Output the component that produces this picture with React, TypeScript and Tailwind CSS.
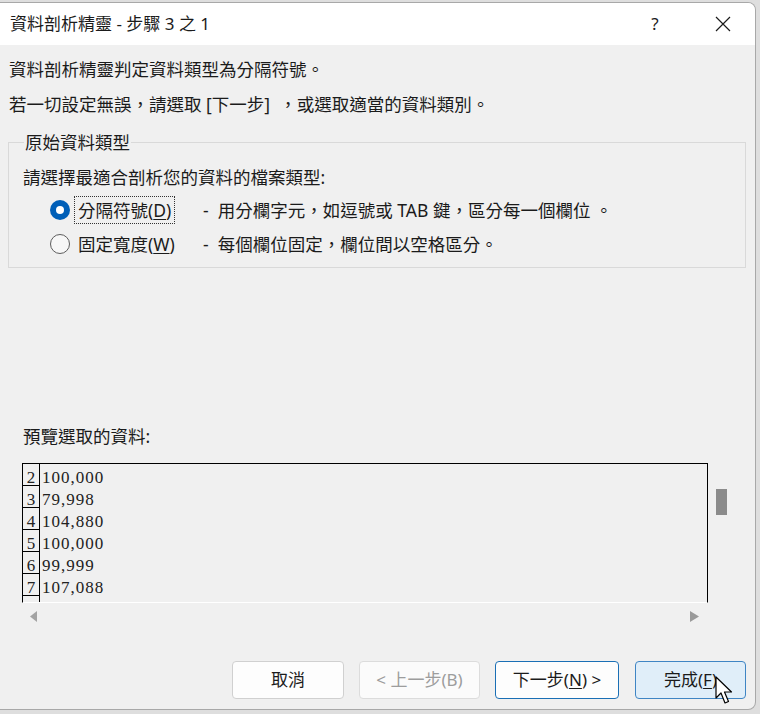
import React from "react";

const ROWS = [
  { n: "2", v: "100,000" },
  { n: "3", v: "79,998" },
  { n: "4", v: "104,880" },
  { n: "5", v: "100,000" },
  { n: "6", v: "99,999" },
  { n: "7", v: "107,088" },
  { n: "", v: "" },
];

function Radio({ checked }: { checked: boolean }) {
  if (checked) {
    return (
      <span className="flex h-[20px] w-[20px] shrink-0 items-center justify-center rounded-full bg-[#005fb8]">
        <span className="h-[8px] w-[8px] rounded-full bg-white" />
      </span>
    );
  }
  return <span className="h-[20px] w-[20px] shrink-0 rounded-full border border-[#5d5d5d] bg-[#f7f7f7]" />;
}

function Cursor() {
  return (
    <svg className="pointer-events-none absolute left-[715px] top-[676px]" width="20" height="30" viewBox="0 0 20 30">
      <path d="M1 1 L1 22 L6 17 L10 27 L13.5 25.5 L9.5 16 L16.5 16 Z" fill="white" stroke="black" strokeWidth="1.2" strokeLinejoin="round" />
    </svg>
  );
}

export default function App() {
  return (
    <div className="relative h-[714px] w-[760px] overflow-hidden bg-[#dedede] pt-[2px] font-['Noto_Sans','Noto_Sans_CJK_TC',sans-serif] text-[#1b1b1b]">
      <div className="flex h-[708px] w-[756px] flex-col overflow-hidden rounded-r-lg border border-l-0 border-[#a8a8a8] bg-[#f0f0f0]">
        {/* title bar */}
        <div className="flex h-[42px] shrink-0 items-center bg-white pl-[10px]">
          <span className="text-[17px] leading-[24px]">資料剖析精靈 - 步驟 3 之 1</span>
          <span className="ml-auto mr-[50px] w-[20px] text-center text-[17px] leading-[24px]">?</span>
          <svg className="mr-[24px]" width="16" height="16" viewBox="0 0 16 16">
            <path d="M1 1 L15 15 M15 1 L1 15" stroke="#1b1b1b" strokeWidth="1.2" />
          </svg>
        </div>

        {/* body */}
        <div className="flex flex-1 flex-col pt-[12px] text-[17.5px]">
          <p className="pl-[9px] leading-[24px]">資料剖析精靈判定資料類型為分隔符號。</p>
          <p className="mt-[11px] pl-[9px] leading-[24px]">若一切設定無誤，請選取 [下一步]&nbsp; ，或選取適當的資料類別。</p>

          <fieldset className="mx-[8px] mt-[14px] w-[738px] border border-[#d9d9d9] px-[14px] pb-[6px] pt-[11px]">
            <legend className="ml-[1px] px-[1px] leading-[24px]">原始資料類型</legend>
            <p className="leading-[24px]">請選擇最適合剖析您的資料的檔案類型:</p>
            <div className="mt-[4px] flex h-[34px] items-center pl-[27px]">
              <Radio checked />
              <span className="ml-[4px] w-[129px] shrink-0">
                <span className="border border-dotted border-[#333] px-[3px] py-[1px] leading-[22px]">
                  分隔符號(<span className="underline underline-offset-2">D</span>)
                </span>
              </span>
              <span className="leading-[24px]">-&nbsp;&nbsp;用分欄字元，如逗號或 TAB 鍵，區分每一個欄位 。</span>
            </div>
            <div className="flex h-[34px] items-center pl-[27px]">
              <Radio checked={false} />
              <span className="ml-[4px] w-[129px] shrink-0 pl-[4px] leading-[22px]">
                固定寬度(<span className="underline underline-offset-2">W</span>)
              </span>
              <span className="leading-[24px]">-&nbsp;&nbsp;每個欄位固定，欄位間以空格區分。</span>
            </div>
          </fieldset>

          <p className="mt-[156px] pl-[23px] leading-[24px]">預覽選取的資料:</p>

          {/* preview */}
          <div className="mt-[15px] flex pl-[22px]">
            <div className="flex w-[686px] flex-col">
              <div className="h-[140px] overflow-hidden border border-b-white border-black font-['Liberation_Serif',serif] text-[17px] tracking-[1px] text-[#222]">
                {ROWS.map((r, i) => (
                  <div key={i} className="flex h-[22px]">
                    <div className="h-[22px] w-[17px] shrink-0 border-b border-r border-black pt-[6px] text-center leading-[15px] tracking-normal">
                      {r.n}
                    </div>
                    <div className="h-[22px] pl-[2px] pt-[6px] leading-[15px]">{r.v}</div>
                  </div>
                ))}
              </div>
              <div className="flex h-[27px] items-center justify-between px-[8px]">
                <svg width="8" height="11" viewBox="0 0 8 11">
                  <path d="M7 0 L7 11 L0 5.5 Z" fill="#a3a3a3" />
                </svg>
                <svg width="9" height="11" viewBox="0 0 9 11" className="mr-[1px]">
                  <path d="M0 0 L0 11 L9 5.5 Z" fill="#9a9a9a" />
                </svg>
              </div>
            </div>
            <div className="w-[30px] pl-[8px] pt-[26px]">
              <div className="h-[26px] w-[11px] bg-[#8b8b8b]" />
            </div>
          </div>

          {/* buttons */}
          <div className="mt-[31px] flex justify-end gap-[15px] pr-[9px] text-[17px]">
            <button className="h-[38px] w-[112px] rounded-[4px] border border-[#d0d0d0] bg-[#fdfdfd] leading-[24px]">取消</button>
            <button className="h-[38px] w-[121px] rounded-[4px] border border-[#dcdcdc] bg-[#fbfbfb] leading-[24px] text-[#9d9d9d]">&lt; 上一步(B)</button>
            <button className="mr-[1px] h-[38px] w-[124px] rounded-[4px] border border-[#1a6fb5] bg-[#fdfdfd] leading-[24px]">
              下一步(<span className="underline underline-offset-2">N</span>) &gt;
            </button>
            <button className="h-[38px] w-[111px] rounded-[4px] border border-[#3f85c4] bg-[#e0eef9] leading-[24px]">
              完成(<span className="underline underline-offset-2">F</span>)
            </button>
          </div>
        </div>
      </div>
      <Cursor />
    </div>
  );
}
